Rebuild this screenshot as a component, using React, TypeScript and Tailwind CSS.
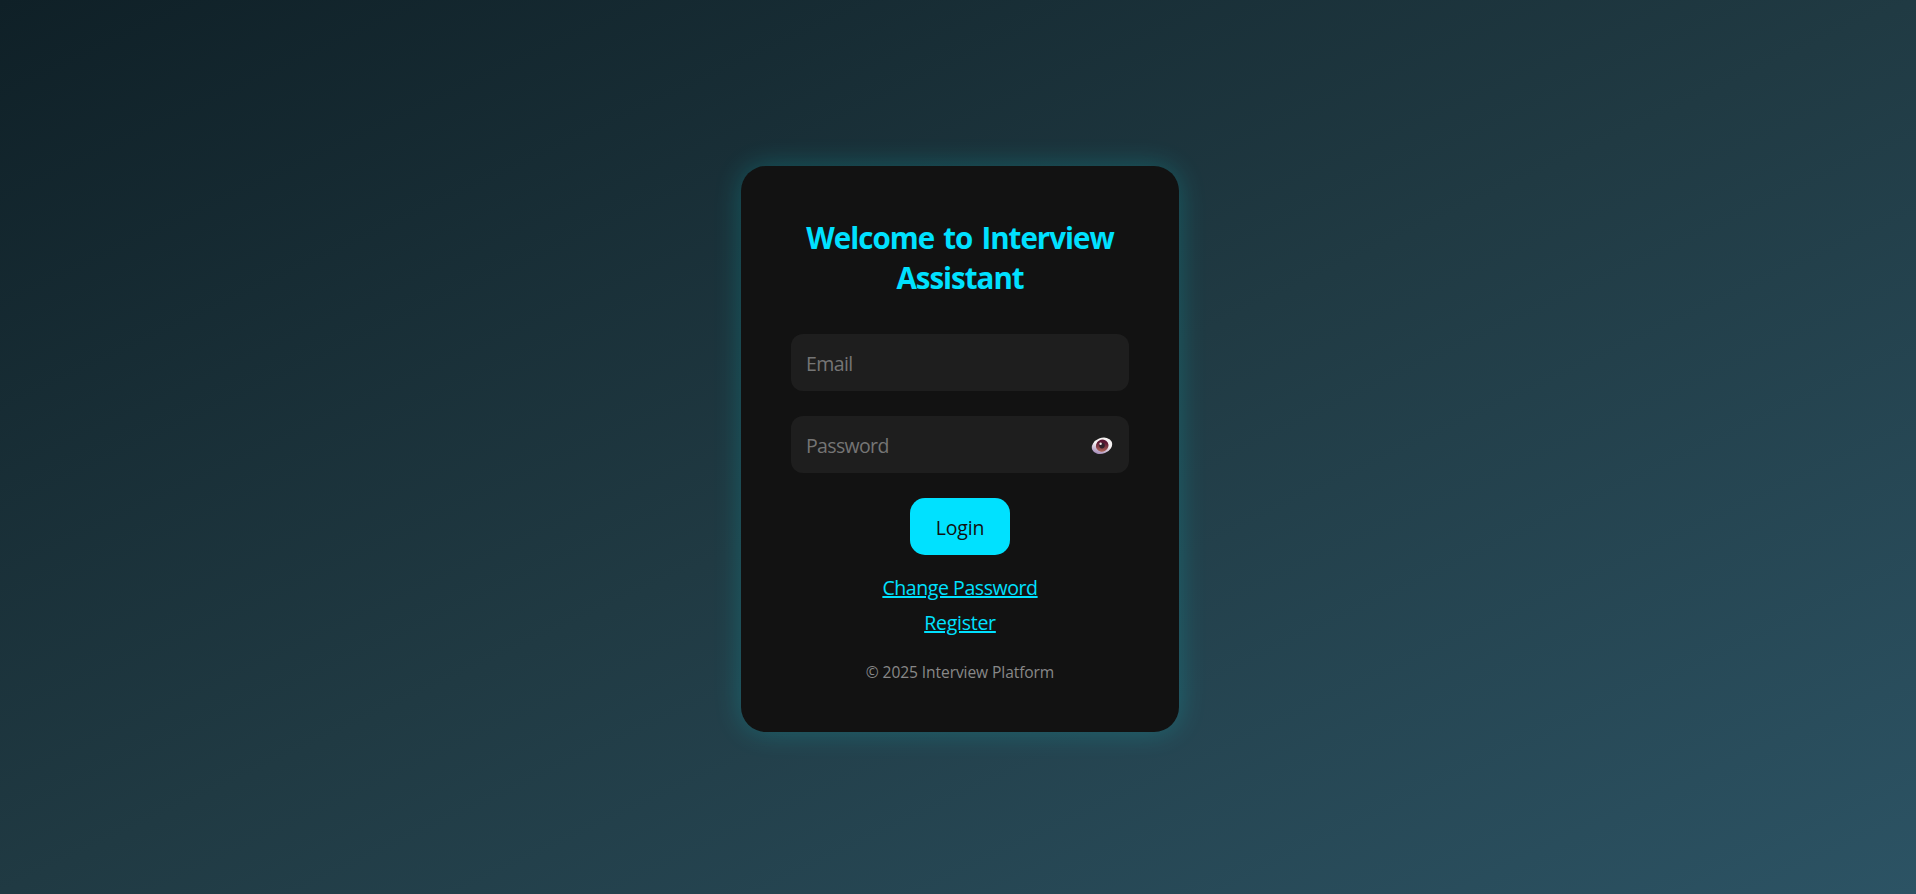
import { useState } from "react";

function EyeIcon() {
  return (
    <svg width="22" height="18" viewBox="0 0 22 18" aria-hidden="true">
      <defs>
        <linearGradient id="sclera" x1="0.85" y1="0.1" x2="0.1" y2="0.8">
          <stop offset="0.45" stopColor="#f6f2f2" />
          <stop offset="1" stopColor="#a58bb8" />
        </linearGradient>
        <linearGradient id="iris" x1="0.8" y1="0.1" x2="0.2" y2="0.9">
          <stop offset="0.25" stopColor="#5c1733" />
          <stop offset="1" stopColor="#b0675a" />
        </linearGradient>
      </defs>
      <ellipse cx="11" cy="8.8" rx="10.5" ry="7.8" transform="rotate(-22 11 8.8)" fill="url(#sclera)" />
      <ellipse cx="11.2" cy="8.6" rx="6.4" ry="6" transform="rotate(-30 11.2 8.6)" fill="url(#iris)" />
      <circle cx="11" cy="8.6" r="2.8" fill="#30212b" />
      <circle cx="9.6" cy="6.8" r="1.2" fill="#f3e6e6" />
    </svg>
  );
}

const fieldClass =
  "block h-[57px] w-full rounded-xl bg-[#1e1e1e] pt-0.5 pr-4 pl-[15px] text-[19.5px] text-white placeholder-[#757575] outline-none";

export default function App() {
  const [visible, setVisible] = useState(false);

  return (
    <main className="flex h-screen items-center justify-center overflow-hidden bg-[linear-gradient(to_bottom_right,#0f2027,#203a43,#2c5364)] pt-1 font-['Open_Sans','Noto_Sans',sans-serif] text-[19.5px]">
      <form
        className="ml-1 flex h-[566px] w-[438px] flex-col items-center rounded-[25px] bg-[#121212] px-[50px] pt-[51px] shadow-[0_0_28px_rgba(0,255,255,0.2)]"
        onSubmit={(event) => event.preventDefault()}
      >
        <h1 className="h-[117px] w-full pt-px text-center text-[29.5px] leading-10 font-[740] tracking-[-1px] text-[#00e1ff] [word-spacing:2.5px]">
          Welcome to Interview Assistant
        </h1>
        <input className={`${fieldClass} tracking-[-0.6px]`} type="email" placeholder="Email" />
        <div className="relative mt-[25px] w-full">
          <input
            className={`${fieldClass} tracking-[-0.65px]`}
            type={visible ? "text" : "password"}
            placeholder="Password"
          />
          <button
            type="button"
            aria-label="Toggle password visibility"
            className="absolute top-[21px] right-4"
            onClick={() => setVisible(!visible)}
          >
            <EyeIcon />
          </button>
        </div>
        <button
          type="submit"
          className="mt-[25px] h-[57px] w-[100px] rounded-[15px] bg-[#00e1ff] pt-0.5 tracking-[-0.15px] text-[#121212]"
        >
          Login
        </button>
        <a
          href="#change"
          className="mt-[19px] leading-[27px] tracking-[-0.42px] text-[#00e1ff] underline decoration-2"
        >
          Change Password
        </a>
        <a
          href="#register"
          className="mt-2 leading-[27px] tracking-[-0.25px] text-[#00e1ff] underline decoration-2"
        >
          Register
        </a>
        <p className="mt-[25px] text-[15.6px] leading-[22px] tracking-[-0.1px] text-[#888888]">
          © 2025 Interview Platform
        </p>
      </form>
    </main>
  );
}
